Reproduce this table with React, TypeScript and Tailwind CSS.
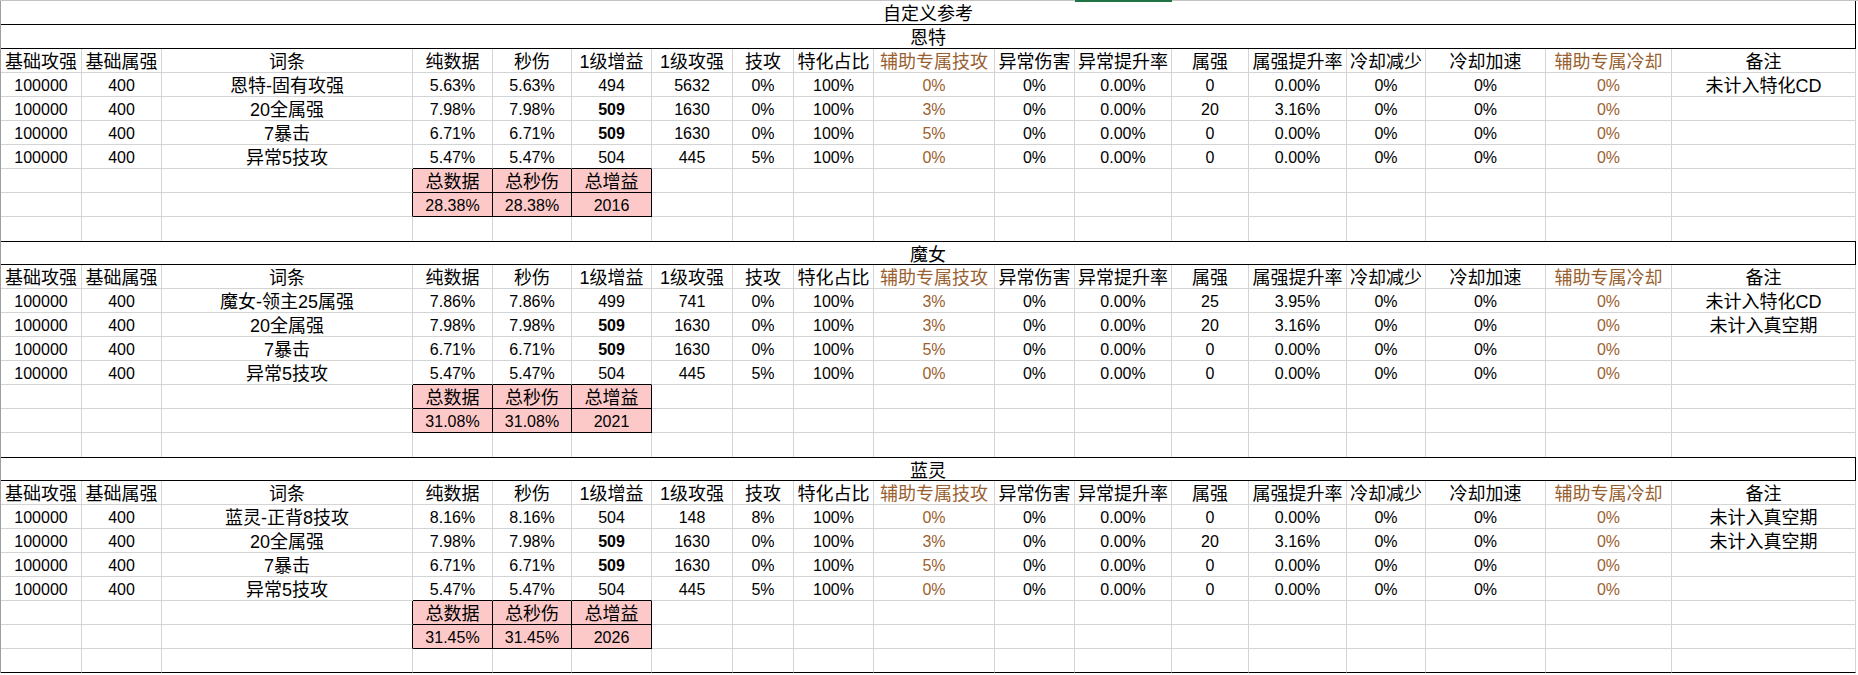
import clsx from "clsx"

const COL_W = [
  "w-[81px]", "w-[80px]", "w-[251px]", "w-[80px]", "w-[79px]", "w-[80px]", "w-[81px]", "w-[61px]", "w-[80px]",
  "w-[121px]", "w-[80px]", "w-[97px]", "w-[77px]", "w-[98px]", "w-[79px]", "w-[120px]", "w-[126px]", "w-[184px]",
]

const HEADERS = [
  "基础攻强", "基础属强", "词条", "纯数据", "秒伤", "1级增益", "1级攻强", "技攻", "特化占比",
  "辅助专属技攻", "异常伤害", "异常提升率", "属强", "属强提升率", "冷却减少", "冷却加速", "辅助专属冷却", "备注",
]

type Section = {
  name: string
  rows: string[][]
  totals: [string, string, string]
}

// "*" prefix = bold value
const SECTIONS: Section[] = [
  {
    name: "恩特",
    rows: [
      ["100000", "400", "恩特-固有攻强", "5.63%", "5.63%", "494", "5632", "0%", "100%", "0%", "0%", "0.00%", "0", "0.00%", "0%", "0%", "0%", "未计入特化CD"],
      ["100000", "400", "20全属强", "7.98%", "7.98%", "*509", "1630", "0%", "100%", "3%", "0%", "0.00%", "20", "3.16%", "0%", "0%", "0%", ""],
      ["100000", "400", "7暴击", "6.71%", "6.71%", "*509", "1630", "0%", "100%", "5%", "0%", "0.00%", "0", "0.00%", "0%", "0%", "0%", ""],
      ["100000", "400", "异常5技攻", "5.47%", "5.47%", "504", "445", "5%", "100%", "0%", "0%", "0.00%", "0", "0.00%", "0%", "0%", "0%", ""],
    ],
    totals: ["28.38%", "28.38%", "2016"],
  },
  {
    name: "魔女",
    rows: [
      ["100000", "400", "魔女-领主25属强", "7.86%", "7.86%", "499", "741", "0%", "100%", "3%", "0%", "0.00%", "25", "3.95%", "0%", "0%", "0%", "未计入特化CD"],
      ["100000", "400", "20全属强", "7.98%", "7.98%", "*509", "1630", "0%", "100%", "3%", "0%", "0.00%", "20", "3.16%", "0%", "0%", "0%", "未计入真空期"],
      ["100000", "400", "7暴击", "6.71%", "6.71%", "*509", "1630", "0%", "100%", "5%", "0%", "0.00%", "0", "0.00%", "0%", "0%", "0%", ""],
      ["100000", "400", "异常5技攻", "5.47%", "5.47%", "504", "445", "5%", "100%", "0%", "0%", "0.00%", "0", "0.00%", "0%", "0%", "0%", ""],
    ],
    totals: ["31.08%", "31.08%", "2021"],
  },
  {
    name: "蓝灵",
    rows: [
      ["100000", "400", "蓝灵-正背8技攻", "8.16%", "8.16%", "504", "148", "8%", "100%", "0%", "0%", "0.00%", "0", "0.00%", "0%", "0%", "0%", "未计入真空期"],
      ["100000", "400", "20全属强", "7.98%", "7.98%", "*509", "1630", "0%", "100%", "3%", "0%", "0.00%", "20", "3.16%", "0%", "0%", "0%", "未计入真空期"],
      ["100000", "400", "7暴击", "6.71%", "6.71%", "*509", "1630", "0%", "100%", "5%", "0%", "0.00%", "0", "0.00%", "0%", "0%", "0%", ""],
      ["100000", "400", "异常5技攻", "5.47%", "5.47%", "504", "445", "5%", "100%", "0%", "0%", "0.00%", "0", "0.00%", "0%", "0%", "0%", ""],
    ],
    totals: ["31.45%", "31.45%", "2026"],
  },
]

const isBrown = (i: number) => i === 9 || i === 16
const hasCjk = (s: string) => /[\u3400-\u9fff]/.test(s)

function Cell({ i, value = "", className }: { i: number; value?: string; className?: string }) {
  const bold = value.startsWith("*")
  return (
    <div
      className={clsx(
        "flex h-[24px] shrink-0 items-center justify-center border-r pt-[3px] whitespace-nowrap",
        COL_W[i],
        hasCjk(value) ? "text-[18px]" : "text-[16px]",
        isBrown(i) && "text-[#9a5f30]",
        bold && "font-bold",
        className ?? "border-b border-[#d4d4d4]",
      )}
    >
      {bold ? value.slice(1) : value}
    </div>
  )
}

function GridRow({ values, kind }: { values?: string[]; kind?: "lastData" | "totalHead" | "totalVal" | "blank" | "blankEnd" }) {
  return (
    <div className="flex">
      {COL_W.map((_, i) => {
        const inBox = i >= 3 && i <= 5
        let cls = "border-b border-[#d4d4d4]"
        if (kind === "lastData" && inBox) cls = "border-b border-b-black border-r-[#d4d4d4]"
        if ((kind === "totalHead" || kind === "totalVal") && inBox) cls = "border-b border-black bg-[#fcc8c8]"
        if ((kind === "totalHead" || kind === "totalVal") && i === 2) cls = "border-b border-b-[#d4d4d4] border-r-black"
        if (kind === "blank") cls = "border-[#d4d4d4]"
        if (kind === "blankEnd") cls = "border-b border-b-black border-r-[#d4d4d4]"
        return <Cell key={i} i={i} value={values?.[i]} className={cls} />
      })}
    </div>
  )
}

function NameRow({ name, top }: { name: string; top: boolean }) {
  return (
    <div
      className={clsx(
        "flex h-[24px] w-[1855px] items-center justify-center border-r border-b border-black pt-[3px] text-[18px]",
        top && "border-t",
      )}
    >
      {name}
    </div>
  )
}

export default function App() {
  return (
    <div
      className="min-h-screen bg-white leading-none text-black"
      style={{ fontFamily: '"Liberation Sans", "Noto Sans CJK SC", sans-serif' }}
    >
      <div className="relative h-px w-full bg-[#c4c4c4]">
        <div className="absolute top-0 left-[1075px] h-[2px] w-[97px] bg-[#217346]" />
      </div>
      <div className="w-[1856px] border-l border-[#9e9e9e]">
        <div className="flex h-[24px] w-[1855px] items-center justify-center border-r border-b border-black pt-[3px] text-[18px]">
          自定义参考
        </div>
        {SECTIONS.map((s, si) => (
          <div key={s.name}>
            <NameRow name={s.name} top={si > 0} />
            <GridRow values={HEADERS} />
            {s.rows.map((r, ri) => (
              <GridRow key={ri} values={r} kind={ri === s.rows.length - 1 ? "lastData" : undefined} />
            ))}
            <GridRow kind="totalHead" values={["", "", "", "总数据", "总秒伤", "总增益"]} />
            <GridRow kind="totalVal" values={["", "", "", ...s.totals]} />
            <GridRow kind={si === SECTIONS.length - 1 ? "blankEnd" : "blank"} />
          </div>
        ))}
      </div>
    </div>
  )
}
